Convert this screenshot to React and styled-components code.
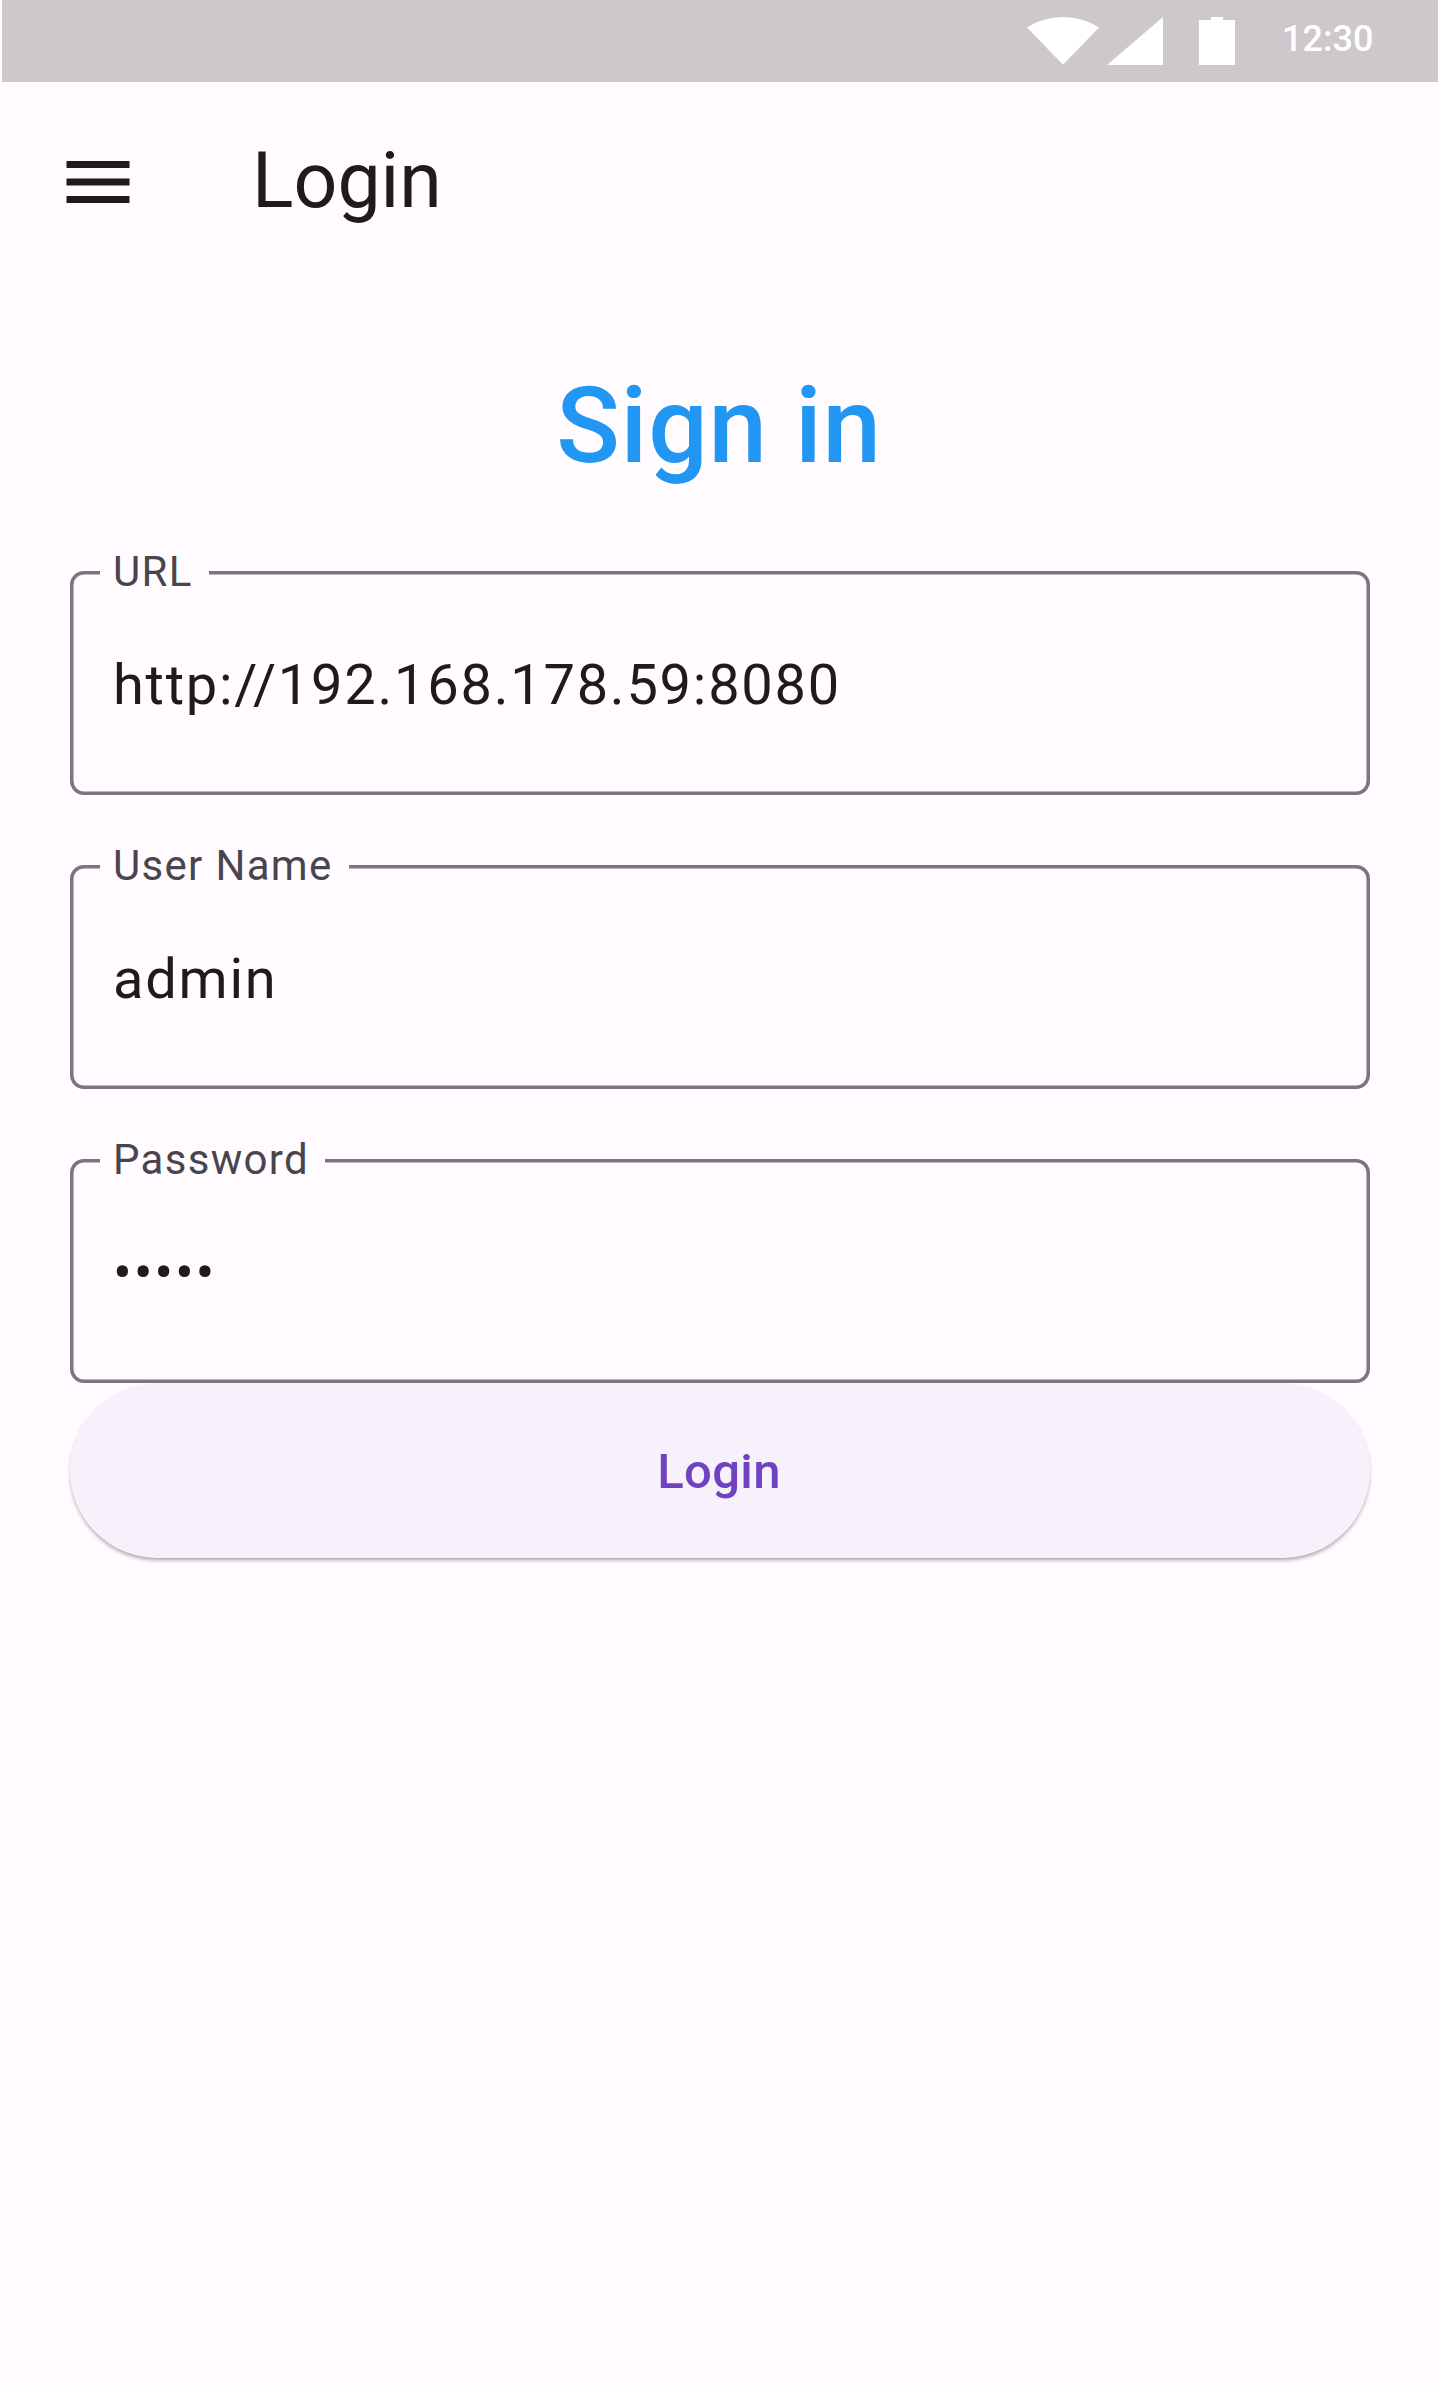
import React from "react";
import styled, { createGlobalStyle } from "styled-components";

const GlobalStyle = createGlobalStyle`
  *, *::before, *::after { box-sizing: border-box; }
  body {
    margin: 0;
    background: #fffbff;
    font-family: Roboto, "Liberation Sans", sans-serif;
  }
`;

const Screen = styled.div`
  display: flex;
  flex-direction: column;
  width: 1440px;
  height: 2392px;
  background: #fffbff;
  color: #1d1b1e;
  overflow: hidden;
`;

const StatusBar = styled.header`
  display: flex;
  justify-content: flex-end;
  align-items: flex-start;
  height: 82px;
  margin: 0 2px;
  padding: 17px 66px 0 0;
  background: #cdc8cc;
  color: #fff;
`;

const StatusIcons = styled.svg`
  flex: none;
  width: 208px;
  height: 48px;
  margin-right: 47px;
  fill: currentColor;
`;

const Clock = styled.time`
  width: 90px;
  font-size: 36px;
  font-weight: 500;
  line-height: 44px;
  white-space: nowrap;
`;

const AppBar = styled.nav`
  display: flex;
  align-items: center;
  gap: 112px;
  height: 200px;
  padding-left: 56px;
`;

const MenuIcon = styled.svg`
  width: 84px;
  height: 84px;
  fill: currentColor;
`;

const BarTitle = styled.h1`
  margin: 0;
  padding-bottom: 2px;
  font-size: 77px;
  font-weight: 400;
  line-height: 98px;
`;

const Form = styled.form`
  display: flex;
  flex-direction: column;
  padding: 83px 70px 0;
`;

const Heading = styled.h2`
  margin: 0 0 83px;
  padding-right: 2px;
  font-size: 105px;
  font-weight: 500;
  line-height: 123px;
  letter-spacing: 0.875px;
  text-align: center;
  color: #2196f3;
`;

const Fields = styled.div`
  display: flex;
  flex-direction: column;
  gap: 70px;
`;

const Field = styled.div`
  position: relative;
  display: flex;
  align-items: center;
  height: 224px;
  padding: 4px 43px 0;
  border-radius: 14px;
  box-shadow: inset 0 0 0 3.5px #7a757f;
`;

const Label = styled.label`
  position: absolute;
  top: -24px;
  left: 30px;
  padding: 0 16px 0 13px;
  background: #fffbff;
  color: #49454e;
  font-size: 42px;
  line-height: 49px;
  letter-spacing: 1.3125px;
  white-space: nowrap;
`;

const Value = styled.div`
  font-size: 56px;
  line-height: 84px;
  letter-spacing: 1.75px;
  white-space: nowrap;
`;

const SubmitButton = styled.button`
  display: flex;
  align-items: center;
  justify-content: center;
  height: 175px;
  padding: 2px 2px 0 0;
  border: 0;
  border-radius: 87.5px;
  background: #f7f1fc;
  box-shadow: 0 3px 4px -1px rgba(0, 0, 0, 0.36);
  color: #6f43c0;
  font-family: inherit;
  font-size: 49px;
  font-weight: 500;
  line-height: 70px;
  letter-spacing: 0.35px;
`;

const fields = [
  { label: "URL", value: "http://192.168.178.59:8080" },
  { label: "User Name", value: "admin" },
  { label: "Password", value: "•••••" },
];

export default function App() {
  return (
    <>
      <GlobalStyle />
      <Screen>
        <StatusBar>
          <StatusIcons viewBox="0 0 208 48" aria-hidden="true">
            <path d="M0 10.5Q16 0 36 0T72 10.5L36 47.7Z" />
            <path d="M80 48L136 0V48Z" />
            <path d="M172 3H184V0H196V3H208V48H172Z" />
          </StatusIcons>
          <Clock>12:30</Clock>
        </StatusBar>
        <AppBar>
          <MenuIcon viewBox="0 0 24 24" aria-label="Menu">
            <path d="M3 18h18v-2H3v2zm0-5h18v-2H3v2zm0-7v2h18V6H3z" />
          </MenuIcon>
          <BarTitle>Login</BarTitle>
        </AppBar>
        <Form>
          <Heading>Sign in</Heading>
          <Fields>
            {fields.map((field) => (
              <Field key={field.label}>
                <Label>{field.label}</Label>
                <Value>{field.value}</Value>
              </Field>
            ))}
          </Fields>
          <SubmitButton type="button">Login</SubmitButton>
        </Form>
      </Screen>
    </>
  );
}
